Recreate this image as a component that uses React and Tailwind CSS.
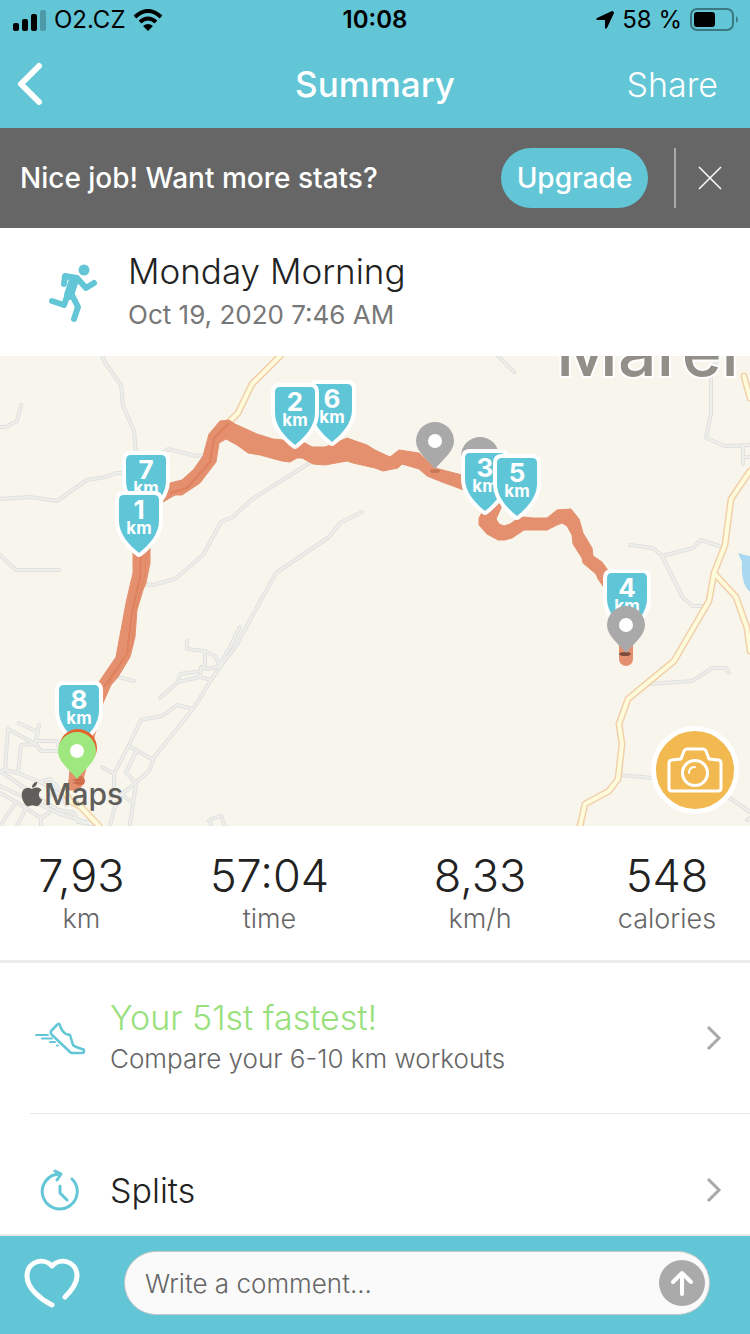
import React from "react";
import { FaApple } from "react-icons/fa";

const MINOR_ROADS = [
  "M102 0L106 8L121 29L123 50L134 75L136 98",
  "M21 49L17 65L6 71H0",
  "M0 143L30 141L57 145L87 124L106 121L116 117H126",
  "M0 199L16 214H59",
  "M164 96L168 93L196 100L206 99",
  "M316 103L251 144L233 161L221 166L203 199L175 223L153 229L142 228",
  "M362 156L340 167L329 181L276 217L262 242L236 290L220 311L211 324L193 353L155 400L149 415L134 428L121 439L114 453L110 470",
  "M240 271L229 293L220 308",
  "M187 285V293L205 295L215 300L220 310L208 313L201 311L200 321L211 324",
  "M205 295V309L201 314",
  "M200 321L178 326L160 342M178 325L180 318L201 315",
  "M193 353L177 349L162 360L141 364L129 389L114 418V430L110 445",
  "M129 390L152 403M136 396L126 416L136 428L130 468",
  "M102 411L114 418M121 438L133 447",
  "M134 325L118 321",
  "M19 367L38 376L35 387L41 395H60M39 369L36 385H56L60 392M8 373L5 414L0 415M8 373L35 388L21 389L18 417L5 414",
  "M0 415L42 444L60 455L64 459M0 430L60 458L100 470M18 417L40 426L60 438",
  "M0 437L16 446L1 469M16 446L26 452L17 470M26 452L41 462V470M41 462L49 457M40 426L50 423L60 434L66 449M60 454L74 457L78 466L90 468M50 439L62 437",
  "M212 470L209 465L214 462L221 460L225 470",
  "M498 0L514 16",
  "M718 4L711 14V58L706 82L725 90L750 89M743 90V108M743 101H750",
  "M630 189L653 192L662 200L693 192L701 184L722 191M662 200L683 242L693 250H704",
  "M649 328L692 325L712 312H726L729 317",
  "M620 419L653 422M728 441L750 456M747 464L750 462",
];

const MAIN_ROADS = [
  "M280 0L252 28L238 57L229 66",
  "M744 20L750 42",
  "M750 115L731 143L725 189L714 217L709 245L674 305L628 343L619 368L622 388L618 423L609 435L585 448L580 470",
  "M714 217L736 241L747 272L750 295",
  "M65 436L70 445L80 450L99 470",
];

const ROUTE =
  "M220 65L229 64L235 68L257 78L273 83L283 84L305 87L312 91L325 91L333 88L347 82L367 89L375 94L390 101L399 94L419 97L435 112L462 119L500 138L501 152L496 163L499 168L504 170L510 168L517 163L523 161L533 162L547 162L557 154L571 153L579 163L583 177L592 192L593 200L602 206L607 213L632 250L626 262L603 230L598 223L596 218L583 207L582 202L573 188L572 179L567 170L562 167L557 169L547 174L524 174L512 182L505 184L498 184L487 178L479 169L479 162L483 155L490 142L461 133L442 126L427 120L419 113L402 108L398 112L383 115L375 112L353 107L347 105L325 109L313 108L302 102L297 102L290 106L282 105L260 99L248 97L237 89L226 83L219 87L216 106L200 127L182 139L175 139L163 146L150 185L150 207L146 227L143 234L137 254L135 281L130 301L118 321L111 329L103 347L84 420L80 434L68 434L70 414L90 345L99 326L116 301L126 247L129 234L133 217L133 197L140 140L170 127L182 124L194 113L203 100L209 78Z";

function Kilometre({ x, y, n }) {
  return (
    <g transform={`translate(${x} ${y})`}>
      <path
        d="M-20 5Q-20 0 -15 0H15Q20 0 20 5V26C20 39 10 50 0 58C-10 50 -20 39 -20 26Z"
        fill="#5fc6d8"
        stroke="#fff"
        strokeWidth="8"
        strokeLinejoin="round"
        paintOrder="stroke"
      />
      <text y="24" textAnchor="middle" fill="#fff" className="text-[26px] font-bold">{n}</text>
      <text y="39" textAnchor="middle" fill="#fff" className="text-[17px] font-bold">km</text>
    </g>
  );
}

function Pin({ x, y, color, dot = true }) {
  return (
    <g transform={`translate(${x} ${y})`}>
      <path d="M0 0C-7 -9 -19 -17 -19 -28A19 19 0 0 1 19 -28C19 -17 7 -9 0 0Z" fill={color} />
      {dot && <circle cy="-28" r="7" fill="#fff" />}
    </g>
  );
}

function RouteMap() {
  return (
    <svg viewBox="0 0 750 470" className="block w-full" role="img" aria-label="Route map">
      <rect width="750" height="470" fill="#f8f5ec" />
      <path d="M738 197L745 199L750 200V236C744 231 741 220 742 206Z" fill="#a9d8f0" />
      <g fill="none" strokeLinejoin="round" strokeLinecap="round">
        <path d={MINOR_ROADS.join("")} stroke="#e0e1df" strokeWidth="4" />
        <path d={MINOR_ROADS.join("")} stroke="#eeeeeb" strokeWidth="2" />
        <path d={MAIN_ROADS.join("")} stroke="#f1d0ac" strokeWidth="7" />
        <path d={MAIN_ROADS.join("")} stroke="#fefbdb" strokeWidth="4" />
      </g>
      <text x="556" y="20" fill="#928e88" stroke="#fff" strokeWidth="4" paintOrder="stroke" className="text-[68px] font-medium">
        Marer
      </text>
      <path d={ROUTE} fill="#e4906e" stroke="#e4906e" strokeLinejoin="round" />
      <path d="M229 67L214 82L210 106L187 132L170 137M141 200L140 222L132 256L127 298L104 331" fill="none" stroke="#df815c" strokeWidth="2" />
      <path d="M146 200L145 218L136 252L132 290L108 329" fill="none" stroke="#e08560" />
      <rect x="619" y="280" width="14" height="30" rx="7" fill="#e4906e" />
      <circle cx="80" cy="425" r="5" fill="#d97350" />
      <ellipse cx="435" cy="115" rx="5" ry="2" fill="#c87856" />
      <ellipse cx="625" cy="298" rx="6" ry="2" fill="#7b4c3a" />
      <path d="M73 424H83M73 427H83" stroke="#bd6547" />
      <Kilometre x={332} y={28} n="6" />
      <Kilometre x={295} y={31} n="2" />
      <Kilometre x={146} y={99} n="7" />
      <Kilometre x={139} y={139} n="1" />
      <Pin x={435} y={113} color="#a9a9a9" />
      <Pin x={480} y={128} color="#a9a9a9" />
      <Kilometre x={485} y={97} n="3" />
      <Kilometre x={517} y={102} n="5" />
      <Kilometre x={627} y={217} n="4" />
      <Pin x={626} y={297} color="#a9a9a9" />
      <Kilometre x={79} y={329} n="8" />
      <Pin x={78} y={420} color="#e2642f" dot={false} />
      <Pin x={77} y={423} color="#9fe880" />
    </svg>
  );
}

function Chevron() {
  return (
    <svg viewBox="0 0 16 26" className="h-[26px] w-4 shrink-0" fill="none" stroke="#a9a9a9" strokeWidth="3" aria-hidden="true">
      <path d="M2 2L13 13L2 24" />
    </svg>
  );
}

const STATS = [
  { value: "7,93", label: "km", width: "w-[163px]" },
  { value: "57:04", label: "time", width: "w-[213px]" },
  { value: "8,33", label: "km/h", width: "w-[208px]" },
  { value: "548", label: "calories", width: "w-[166px]" },
];

export default function App() {
  return (
    <div className="flex min-h-screen flex-col bg-white font-['Inter','Liberation_Sans',sans-serif] text-[#222]">
      <header className="bg-[#62c6d6]">
        <div className="grid h-10 grid-cols-[1fr_auto_1fr] items-center px-3 text-2xl text-black">
          <div className="flex items-center gap-2">
            <svg viewBox="0 0 34 22" className="h-[22px] w-[34px]" aria-hidden="true">
              <rect x="1" y="14" width="6" height="8" rx="2" />
              <rect x="10" y="10" width="6" height="12" rx="2" />
              <rect x="19" y="5" width="6" height="17" rx="2" />
              <rect x="28" y="1" width="6" height="21" rx="2" opacity=".22" />
            </svg>
            <span>O2.CZ</span>
            <svg viewBox="0 0 30 22" className="h-[22px] w-[30px]" aria-hidden="true">
              <g fill="none" stroke="#000" strokeWidth="4">
                <path d="M2 8Q15 -4 28 8" />
                <path d="M7 13Q15 6 23 13" />
              </g>
              <path d="M10 17Q15 13 20 17L15 22Z" />
            </svg>
          </div>
          <span className="font-semibold">10:08</span>
          <div className="flex items-center justify-end gap-2">
            <svg viewBox="0 0 18 18" className="h-[18px] w-[18px]" aria-hidden="true">
              <path d="M1 7L16 0Q18 0 18 2L11 17Q9 19 9 16V9H2Q-1 9 1 7Z" />
            </svg>
            <span>58 %</span>
            <svg viewBox="0 0 48 24" className="h-6 w-12" aria-hidden="true">
              <rect x="1" y="1" width="42" height="21" rx="6" fill="none" stroke="#000" strokeOpacity=".4" strokeWidth="2" />
              <rect x="4" y="4" width="21" height="15" rx="3" />
              <path d="M46 8Q50 11.500 46 15Z" opacity=".4" />
            </svg>
          </div>
        </div>
        <nav className="grid h-[88px] grid-cols-[1fr_auto_1fr] items-center px-8 text-white">
          <button type="button" aria-label="Back" className="-ml-4 w-fit">
            <svg viewBox="0 0 28 44" className="h-11 w-7" fill="none" stroke="#fff" strokeWidth="6" strokeLinecap="round" strokeLinejoin="round">
              <path d="M23 4L5 22L23 40" />
            </svg>
          </button>
          <h1 className="text-[35px] font-medium">Summary</h1>
          <button type="button" className="justify-self-end text-[34px] font-light">Share</button>
        </nav>
      </header>

      <section className="flex h-[100px] items-center bg-[#666] pr-[26px] pl-5 text-[28px] font-medium text-white">
        <p className="flex-1">Nice job! Want more stats?</p>
        <button type="button" className="h-[60px] w-[147px] rounded-full bg-[#62c6d6]">Upgrade</button>
        <div className="mr-5 ml-[26px] h-[60px] w-0.5 bg-[#aaa]" />
        <button type="button" aria-label="Dismiss">
          <svg viewBox="0 0 28 28" className="h-7 w-7" stroke="#fff" strokeWidth="1.5">
            <path d="M3 3L25 25M25 3L3 25" />
          </svg>
        </button>
      </section>

      <section className="flex h-32 items-center gap-[30px] pl-12">
        <svg viewBox="0 0 50 62" className="h-[62px] w-[50px]" fill="none" stroke="#62c6d6" strokeWidth="6" strokeLinecap="round" strokeLinejoin="round" aria-hidden="true">
          <circle cx="36" cy="9" r="5.500" fill="#62c6d6" stroke="none" />
          <path d="M16 23L17 15L29 17L38 27L46 22" />
          <path d="M26 19L21 34" strokeWidth="10" />
          <path d="M20 33L16 44L4 40M24 34L30 46L26 58" />
        </svg>
        <div>
          <h2 className="text-[35px] leading-[46px] font-light">Monday Morning</h2>
          <p className="text-[26px] leading-[42px] text-[#777]">Oct 19, 2020 7:46 AM</p>
        </div>
      </section>

      <section className="relative">
        <RouteMap />
        <div className="absolute bottom-3 left-5 flex items-center text-[30px] leading-10 font-medium text-[#5f5e5a]">
          <FaApple className="h-7 w-6" aria-hidden="true" />
          <span>Maps</span>
        </div>
        <button type="button" aria-label="Add photo" className="absolute right-[11px] bottom-3 flex h-[88px] w-[88px] items-center justify-center rounded-full border-[5px] border-white bg-[#f2b950]">
          <svg viewBox="0 0 56 48" className="h-12 w-14" fill="none" stroke="#fff" strokeWidth="3" strokeLinejoin="round">
            <path d="M5 14L14 13L17 5Q18 3 20 3H36Q38 3 39 5L42 13L51 14Q54 14 54 17V42Q54 45 51 45H5Q2 45 2 42V17Q2 14 5 14Z" />
            <circle cx="28" cy="27" r="12.500" />
            <path d="M22 27Q22 21 28 21" strokeWidth="2" strokeLinecap="round" />
          </svg>
        </button>
      </section>

      <dl className="flex h-[137px] justify-between border-b-[3px] border-[#ebebeb] pt-6 text-center">
        {STATS.map((s) => (
          <div key={s.label} className={`flex flex-col-reverse justify-end ${s.width}`}>
            <dt className="text-[27px] leading-[34px] font-light text-[#666]">{s.label}</dt>
            <dd className="text-[45px] leading-[52px] font-light">{s.value}</dd>
          </div>
        ))}
      </dl>

      <main className="flex-1">
        <a href="#compare" className="ml-[30px] flex h-[151px] items-center border-b border-[#e6e6e6] pr-7">
          <svg viewBox="0 0 52 34" className="ml-1 h-[34px] w-[52px]" fill="none" stroke="#62c6d6" strokeWidth="2.5" strokeLinecap="round" strokeLinejoin="round" aria-hidden="true">
            <path d="M24 3L17 10Q16 12 18 14L36 31Q37 32 38 32H48Q50 32 50 30Q50 28 48 28Q41 26 39 24L36 14L32 13Q27 10 26 4Q25 2 24 3Z" />
            <path d="M2 14H14M8 17.500H18M16 21H21M23 24.500H24" strokeWidth="2" />
          </svg>
          <div className="ml-6 flex-1">
            <h3 className="text-[34px] leading-[42px] font-light text-[#98e07c]">Your 51st fastest!</h3>
            <p className="text-[26px] leading-10 font-light text-[#666]">Compare your 6-10 km workouts</p>
          </div>
          <Chevron />
        </a>
        <a href="#splits" className="flex h-[122px] items-center border-b-2 border-[#e9e9e9] pt-8 pr-7 pl-10">
          <svg viewBox="0 0 40 42" className="h-[42px] w-10" fill="none" stroke="#62c6d6" strokeWidth="3" strokeLinecap="round" strokeLinejoin="round" aria-hidden="true">
            <path d="M20 5A17.500 17.500 0 1 0 32 10M15 2L21 5L17 11M20 17V24L27 31" />
          </svg>
          <span className="ml-[30px] flex-1 text-[34px] font-light">Splits</span>
          <Chevron />
        </a>
      </main>

      <footer className="flex h-[98px] items-center bg-[#62c6d6] pr-10 pb-1 pl-6">
        <button type="button" aria-label="Like">
          <svg viewBox="0 0 56 50" className="h-[50px] w-14" fill="none" stroke="#fff" strokeWidth="5" strokeLinecap="round" strokeLinejoin="round">
            <path d="M28 47C18 42 3 31 3 18C3 3 20 -1 28 8C36 -1 53 3 53 18C53 25 48 32 41 39" />
          </svg>
        </button>
        <div className="ml-11 flex h-16 flex-1 items-center rounded-full border border-[#c8c8c8] bg-[#fafafa] pr-1 pl-5">
          <input type="text" aria-label="Write a comment" placeholder="Write a comment..." className="min-w-0 flex-1 bg-transparent text-[26px] font-light outline-none placeholder:text-[#666]" />
          <button type="button" aria-label="Send" className="flex h-[46px] w-[46px] items-center justify-center rounded-full bg-[#aaa]">
            <svg viewBox="0 0 24 28" className="h-7 w-6" fill="none" stroke="#fff" strokeWidth="4" strokeLinecap="round" strokeLinejoin="round">
              <path d="M12 25V4M3 13L12 4L21 13" />
            </svg>
          </button>
        </div>
      </footer>
    </div>
  );
}
